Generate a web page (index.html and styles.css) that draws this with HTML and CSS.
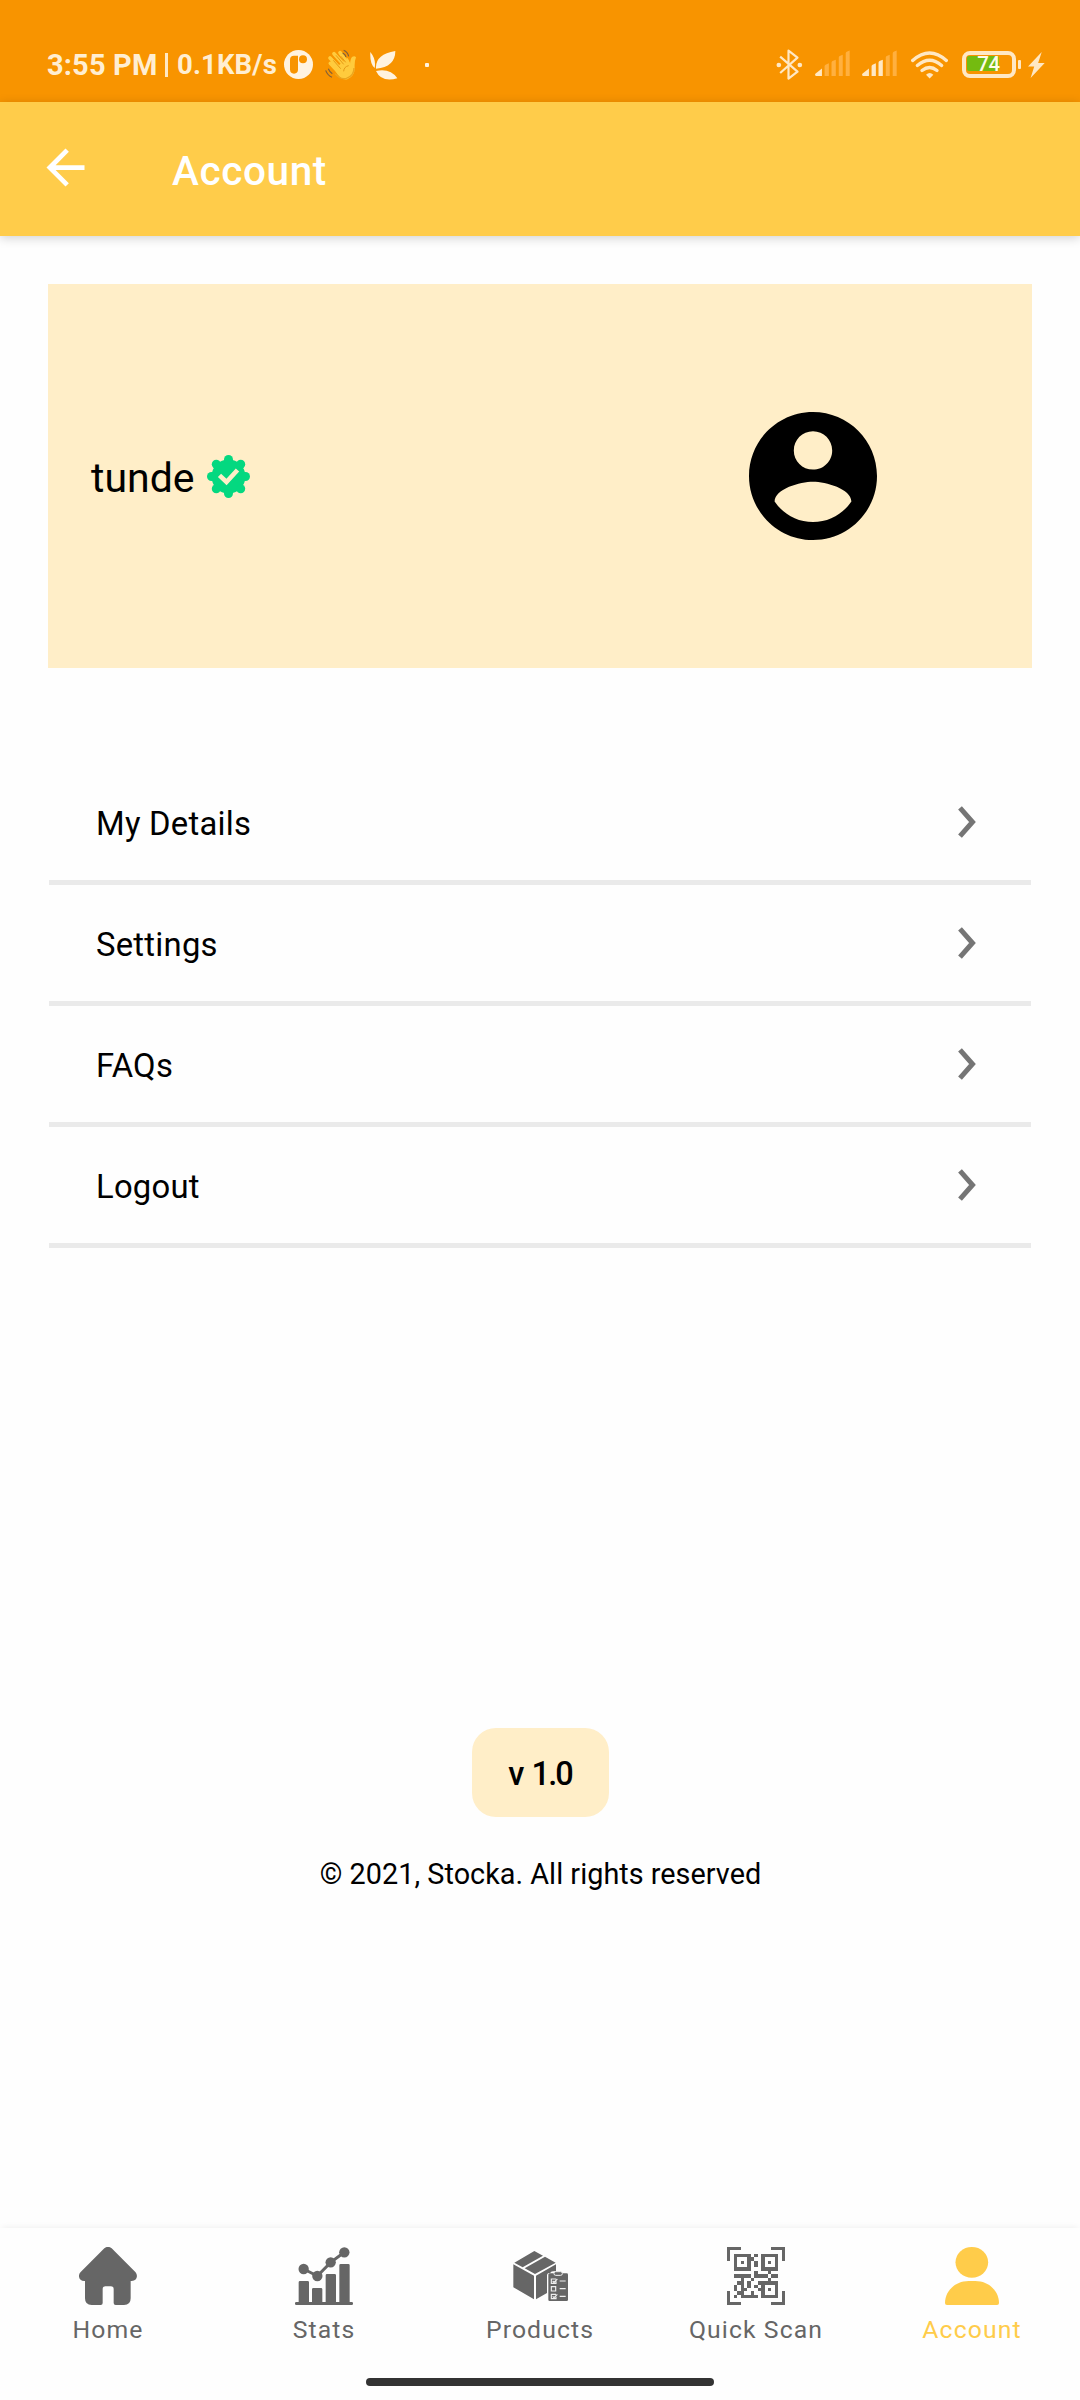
FILE: index.html
```html
<!DOCTYPE html>
<html lang="en">
<head>
<meta charset="utf-8">
<title>Account</title>
<link rel="stylesheet" href="styles.css">
</head>
<body>
<div class="screen">
  <div class="status">
    <span class="clock">3:55 PM</span>
    <span class="bar"></span>
    <span class="speed">0.1KB/s</span>
    <svg class="s-app" viewBox="852 90 87 87"><circle cx="895.5" cy="133.500" r="43.500" fill="#fff3e0"/><path d="M894 107h-12q-12 0-12 12v29q0 13 12 13t12-13z" fill="#f89400"/><circle cx="909" cy="118" r="12" fill="#f89400"/></svg>
    <svg class="s-hand" viewBox="976 85 96 93"><path d="M1003 99l34 38M991 112l34 36M992 128l28 30M1021 96l27 36" stroke="#ffcb3d" stroke-width="11" stroke-linecap="round"/><path d="M1004 145l40-33q6 9 7 19 1-18 7-23 7-4 11 2-5 13-4 30 1 27-22 36-21 5-39-31z" fill="#ffcb3d"/><path d="M1009 104l23 27M1001 119l22 25M1024 107l14 18M1047 135q-14 3-15 17" fill="none" stroke="#e59a16" stroke-width="3"/><path d="M1006 159q16 19 34 14 23-7 23-31" fill="none" stroke="#eba51f" stroke-width="4"/><path d="M1032 89q12 5 15 18M1029 97q8 4 10 12M978 149q5 14 19 21M986 144q4 10 12 15" fill="none" stroke="#806039" stroke-width="3.500"/></svg>
    <svg class="s-leaf" viewBox="1112 88 84 90"><path d="M1113 94q18 22 13 48-15-13-13-48zM1130 144q-3-43 58-53 0 48-58 53zM1130 151q43-9 64 22-48 13-64-22z" fill="#fff3e0"/></svg>
    <span class="dot"></span>
    <svg class="s-bt" viewBox="110 86 80 93"><path d="M122 109l52 45-27 21V91l27 21-52 46" fill="none" stroke="#ffe8c4" stroke-width="6.500" stroke-linejoin="round"/><circle cx="118" cy="134" r="7" fill="#ffe8c4"/><circle cx="181" cy="134" r="7" fill="#ffe8c4"/></svg>
    <svg class="s-sig" viewBox="225 90 106 78"><g fill="#ffb03f"><path d="M254 168v-30q0-2 3-4l10-4v38zM275 168v-40q0-3 3-5l10-4v49zM297 168v-56q0-3 3-4l9-4v64zM318 168V100q0-3 3-5l9-4v77z"/></g><path d="M246 146v22h-18q-5-3-1-7z" fill="#ffe8c4"/></svg>
    <svg class="s-sig" viewBox="225 90 106 78"><path d="M297 168v-56q0-3 3-4l9-4v64zM318 168V100q0-3 3-5l9-4v77z" fill="#ffb03f"/><path d="M246 146v22h-18q-5-3-1-7zM254 168v-30q0-2 3-4l10-4v38zM275 168v-40q0-3 3-5l10-4v49z" fill="#ffe8c4"/></svg>
    <svg class="s-wifi" viewBox="513 89 111 83"><g fill="none" stroke="#ffe8c4" stroke-width="10" stroke-linecap="round"><path d="M518 117q51-45 101 0"/><path d="M532 132q37-31 73 0"/><path d="M546 147q23-18 45 0"/></g><path d="M569 171l-11-11q11-11 22 0z" fill="#ffe8c4"/></svg>
    <span class="battery"><span class="level"></span><span class="pct">74</span></span>
    <span class="nub"></span>
    <svg class="s-bolt" viewBox="864 93 52 79"><path d="M906 93l-42 44h19l-11 35 43-46h-20z" fill="#ffe8c4"/></svg>
  </div>

  <header class="appbar">
    <svg class="back" viewBox="0 0 24 24"><path d="M20 11H7.830l5.590-5.590L12 4l-8 8 8 8 1.410-1.410L7.830 13H20z" fill="#fff"/></svg>
    <h1 class="title">Account</h1>
  </header>

  <main class="main">
    <section class="card">
      <span class="name">tunde</span>
      <svg class="badge" viewBox="0 0 43 43"><g fill="#04d880"><circle cx="21.500" cy="21.500" r="17"/><circle cx="21.500" cy="4.500" r="4.500"/><circle cx="21.500" cy="38.500" r="4.500"/><circle cx="4.500" cy="21.500" r="4.500"/><circle cx="38.500" cy="21.500" r="4.500"/><circle cx="9.300" cy="9.300" r="4.500"/><circle cx="33.700" cy="9.300" r="4.500"/><circle cx="9.300" cy="33.700" r="4.500"/><circle cx="33.700" cy="33.700" r="4.500"/></g><path d="M12.500 20.300l7 6.700L30.500 15" fill="none" stroke="#ffeec8" stroke-width="4.600"/></svg>
      <svg class="avatar" viewBox="2 2 20 20"><path d="M12 2C6.480 2 2 6.480 2 12s4.480 10 10 10 10-4.480 10-10S17.520 2 12 2zm0 3c1.660 0 3 1.340 3 3s-1.340 3-3 3-3-1.340-3-3 1.340-3 3-3zm0 14.200c-2.500 0-4.710-1.280-6-3.220.03-1.990 4-3.080 6-3.080 1.990 0 5.970 1.090 6 3.080-1.290 1.940-3.500 3.220-6 3.220z"/></svg>
    </section>

    <nav class="list">
      <a class="row"><span>My Details</span><svg class="chev" viewBox="0 0 18 32"><path d="M2 1.800l12.500 14.200L2 30.200" /></svg></a>
      <a class="row"><span>Settings</span><svg class="chev" viewBox="0 0 18 32"><path d="M2 1.800l12.500 14.200L2 30.200" /></svg></a>
      <a class="row"><span>FAQs</span><svg class="chev" viewBox="0 0 18 32"><path d="M2 1.800l12.500 14.200L2 30.200" /></svg></a>
      <a class="row"><span>Logout</span><svg class="chev" viewBox="0 0 18 32"><path d="M2 1.800l12.500 14.200L2 30.200" /></svg></a>
    </nav>

    <div class="version">v 1.0</div>
    <p class="copy">© 2021, Stocka. All rights reserved</p>
  </main>

  <footer class="tabs">
    <a class="tab"><svg viewBox="117 111 174 174"><path d="M193 115q11-9 22 0l71 71c9 10 5 27-11 27h-3v52q0 20-20 20h-25q-6 0-6-6v-42q0-8-8-8h-17q-8 0-8 8v42q0 6-6 6h-27q-20 0-20-20v-52h-2c-16 0-21-17-11-27z"/></svg><span>Home</span></a>
    <a class="tab"><svg viewBox="765 111 174 174"><rect x="765" y="276" width="174" height="9" rx="4"/><path d="M776 280v-63q0-4 4-4h23q4 0 4 4v63zM816 280v-42q0-4 4-4h23q4 0 4 4v42zM857 280v-84q0-4 4-4h23q4 0 4 4v84zM898 280V166q0-4 4-4h23q4 0 4 4v114z"/><path d="M791 177l41 21 40-41 41-30" fill="none" stroke="#666" stroke-width="9"/><circle cx="791" cy="177" r="15.500"/><circle cx="832" cy="198" r="15.500"/><circle cx="872" cy="157" r="15.500"/><circle cx="913" cy="127" r="15.500"/></svg><span>Stats</span></a>
    <a class="tab"><svg viewBox="153 111 174 174"><path d="M163 158l60-35 26 14-61 35zM194 175l61-35 32 18-62 34zM160 163l62 34v71l-62-36zM228 197l60-34v20q-17 0-17 6h-6q-4 2-4 7v53l-33 19z"/><path d="M269 190h12q2-6 13-6t14 6h12q4 0 4 4v75q0 4-4 4h-51q-4 0-4-4v-75q0-4 4-4z"/><rect x="282" y="185" width="25" height="11" rx="5" fill="#666" stroke="#f4f4f4" stroke-width="3"/><path d="M288 207h-14v13h14v-6m-10-1l4 4 10-10M274 230h13v13h-13zM288 253h-14v13h14v-6m-10-1l4 4 10-10M299 213h18M299 236h18M299 259h18" fill="none" stroke="#eee" stroke-width="3.500"/></svg><span>Products</span></a>
    <a class="tab"><svg viewBox="0 0 17 17" shape-rendering="crispEdges"><path d="M0 0h4v1H1v3H0zM13 0h4v4h-1V1h-3zM0 13h1v3h3v1H0zM16 13h1v4h-4v-1h3z"/><path fill-rule="evenodd" d="M2 2h5v5H2zM3 3v3h3V3zM4 4h1v1H4zM10 2h5v5h-5zM11 3v3h3V3zM12 4h1v1h-1zM10 10h5v5h-5zM11 11v3h3v-3zM12 12h1v1h-1z"/><path d="M8 2h1v1H8zM7 3h1v1H7zM8 4h1v2H8zM8 7h1v1H8zM12 7h1v1h-1zM2 8h5v1H2zM8 8h4v1H8zM13 8h2v1h-2zM4 9h1v1H4zM7 9h1v1H7zM12 9h1v1h-1zM3 10h2v1H3zM6 10h1v2H6zM9 10h1v1H9zM2 11h1v2H2zM4 11h1v3H4zM8 11h1v1H8zM5 12h1v1H5zM9 12h1v1H9zM3 13h1v1H3zM7 13h1v1H7zM2 14h1v1H2zM4 14h5v1H4z"/></svg><span>Quick Scan</span></a>
    <a class="tab active"><svg viewBox="819 111 174 174"><ellipse cx="905.500" cy="157" rx="49" ry="46"/><path d="M896 213h20c42 0 71 32 71 66q0 6-6 6H831q-6 0-6-6c0-34 29-66 71-66z"/></svg><span>Account</span></a>
  </footer>
  <div class="gesture"></div>
</div>
</body>
</html>
```
FILE: styles.css
```css
* { box-sizing: border-box; }
body { margin: 0; font-family: Roboto, sans-serif; background: #fefefe; color: #000; }
svg { display: block; flex: none; }
.screen { width: 1080px; height: 2400px; display: flex; flex-direction: column; overflow: hidden; }

.status { height: 102px; flex: none; display: flex; align-items: center; padding: 27px 34px 0 47px; background: #f89400; color: #ffeed2; white-space: nowrap; }
.clock { width: 118px; font-size: 29px; font-weight: 700; line-height: 36px; letter-spacing: 0.150px; padding-top: 1px; }
.bar { width: 3px; height: 24px; background: #ffe8c4; margin-right: 9px; }
.speed { width: 107px; font-size: 27.500px; font-weight: 700; line-height: 36px; letter-spacing: 0.150px; }
.s-app { width: 29px; height: 29px; }
.s-hand { width: 32px; height: 31px; margin-left: 12px; }
.s-leaf { width: 28px; height: 30px; margin-left: 13px; }
.dot { width: 4px; height: 4px; border-radius: 1px; background: #fff3e0; margin-left: 27px; }
.s-bt { width: 27px; height: 31px; margin-left: auto; }
.s-sig { width: 35px; height: 26px; margin: 0 0 3px 12px; }
.s-wifi { width: 37px; height: 28px; margin-left: 14px; }
.battery { position: relative; width: 54px; height: 27px; border: 4px solid #ffe8c4; border-radius: 8px; margin-left: 14px; }
.level { position: absolute; left: 1px; top: 1px; width: 32px; height: 15px; border-radius: 2px; background: #74bb10; }
.pct { position: absolute; left: 0; top: 0; width: 45px; text-align: center; font-size: 20.500px; font-weight: 500; line-height: 19px; color: #fffbe8; letter-spacing: -0.500px; }
.nub { width: 3px; height: 9px; background: #ffe8c4; margin-left: 2px; border-radius: 1px; }
.s-bolt { width: 17px; height: 26px; margin: 0 1px 0 7px; }

.appbar { height: 134px; flex: none; display: flex; align-items: center; padding-left: 37px; background: #ffcc4a; box-shadow: 0 2px 10px rgba(0,0,0,.18); }
.back { width: 57px; height: 57px; margin-bottom: 4px; }
.title { margin: 4px 0 0 78px; font-size: 40.500px; line-height: 50px; font-weight: 500; letter-spacing: 0.600px; color: #fff; }

.main { flex: 1; display: flex; flex-direction: column; align-items: center; padding-top: 48px; }
.card { width: 984px; height: 384px; display: flex; align-items: center; padding: 0 155px 0 43px; background: #ffeec8; }
.name { font-size: 41px; line-height: 50px; width: 116px; margin-top: 3px; }
.badge { width: 43px; height: 43px; margin-top: 1px; }
.avatar { width: 128px; height: 128px; margin-left: auto; }
.list { width: 982px; margin-top: 97px; }
.row { height: 121px; display: flex; align-items: center; justify-content: space-between; padding: 0 55px 0 47px; border-bottom: 5px solid #eaeaea; font-size: 32.800px; line-height: 40px; letter-spacing: 0.250px; }
.row:first-child { height: 120px; }
.row span { padding-top: 3px; }
.row:first-child span { padding-top: 2px; }
.chev { width: 18px; height: 32px; fill: none; stroke: #757575; stroke-width: 5px; }
.row:first-child .chev { margin-bottom: 1px; }
.version { width: 137px; height: 89px; margin-top: 480px; border-radius: 24px; background: #ffeec8; text-align: center; font-size: 32.500px; line-height: 92px; font-weight: 500; letter-spacing: -1.900px; word-spacing: 3px; }
.copy { margin: 39px 0 0 1px; font-size: 28.800px; line-height: 36px; letter-spacing: 0.030px; }

.tabs { height: 150px; flex: none; display: grid; grid-template-columns: repeat(5, 1fr); box-shadow: 0 -3px 6px -2px rgba(0,0,0,.06); }
.tab { display: flex; flex-direction: column; align-items: center; padding-top: 19px; color: #666; fill: #666; }
.tab svg { width: 58px; height: 58px; }
.tab span { font-size: 24.750px; line-height: 30px; letter-spacing: 1.100px; margin-top: 10px; white-space: nowrap; }
.active { color: #ffcc4a; fill: #ffcc4a; }
.gesture { width: 348px; height: 8px; flex: none; margin: 0 auto 14px; border-radius: 4px; background: #333; }
```
